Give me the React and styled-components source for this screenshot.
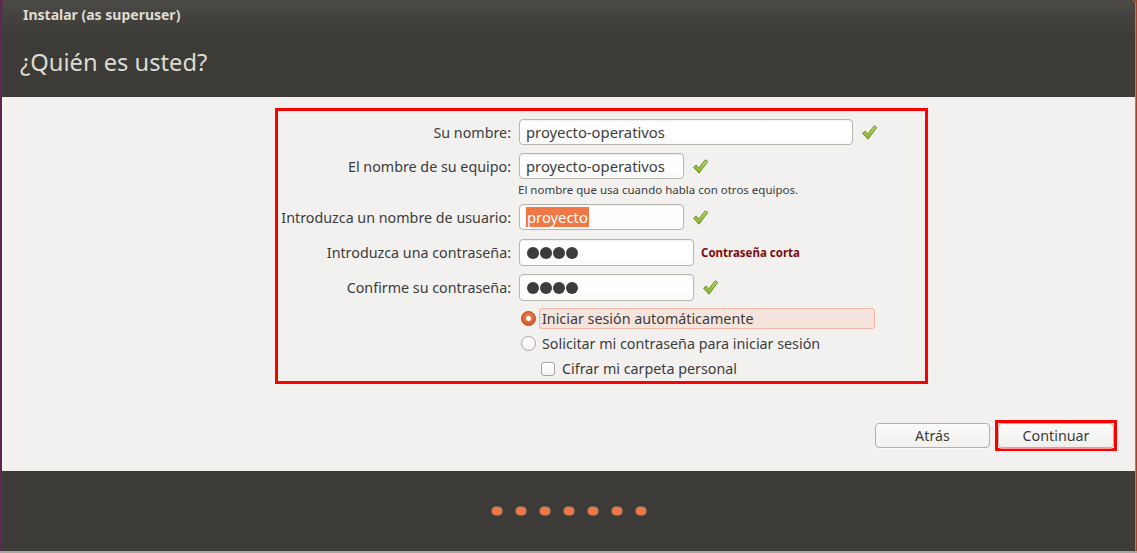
import React from "react";
import styled, { createGlobalStyle } from "styled-components";

const Global = createGlobalStyle`
  html, body { margin: 0; padding: 0; }
  body {
    width: 1137px;
    height: 553px;
    overflow: hidden;
    background: linear-gradient(90deg, #5e2750 0%, #7a2a48 60%, #a8401f 100%);
    font-family: "Noto Sans", "DejaVu Sans", sans-serif;
  }
`;

const Desktop = styled.div`
  height: 553px;
  display: flex;
  flex-direction: column;
`;

const Window = styled.div`
  margin-left: 2px;
  width: 1133px;
  height: 551px;
  display: flex;
  flex-direction: column;
  border-radius: 4px 4px 0 0;
  overflow: hidden;
  box-shadow: 1px 0 0 #8f8c86;
`;

const BottomLine = styled.div`
  height: 2px;
  background: #a9a7a3;
`;

const Header = styled.div`
  height: 97px;
  flex: none;
  background: linear-gradient(180deg, #4b4a46 0px, #3e3d39 30px, #3c3b37 40px, #3c3b37 100%);
  display: flex;
  flex-direction: column;
  color: #dfdbd2;
`;

const TitleBar = styled.div`
  height: 30px;
  padding-left: 21px;
  display: flex;
  align-items: center;
  font-size: 14px;
  font-weight: 700;
  color: #dfdbd2;
  padding-bottom: 1px;
  box-sizing: border-box;
`;

const PageTitle = styled.h1`
  margin: 0;
  padding-left: 18px;
  margin-top: 17px;
  font-size: 23.7px;
  font-weight: 400;
  line-height: 30px;
  color: #dfdbd2;
`;

const Body = styled.div`
  flex: 1;
  background: #f2f1f0;
  display: flex;
  flex-direction: column;
`;

const Frame = styled.div`
  margin-top: 11px;
  margin-left: 273px;
  width: 653px;
  height: 276px;
  box-sizing: border-box;
  border: 3px solid #ff0000;
  padding-top: 8px;
  display: flex;
  flex-direction: column;
`;

const Row = styled.div`
  display: grid;
  grid-template-columns: 233px auto auto 1fr;
  column-gap: 8px;
  align-items: center;
  margin-top: ${(p) => p.$top || 0}px;
`;

const Label = styled.label`
  text-align: right;
  font-size: 14.3px;
  color: #3c3c3c;
  white-space: nowrap;
`;

const Field = styled.div`
  width: ${(p) => p.$w}px;
  height: ${(p) => p.$h || 26}px;
  box-sizing: border-box;
  border: 1px solid #b8b5af;
  border-radius: 4px;
  background: linear-gradient(180deg, #fdfdfd 0%, #ffffff 60%, #fafafa 100%);
  box-shadow: inset 0 1px 1px rgba(0, 0, 0, 0.05);
  display: flex;
  align-items: center;
  padding-left: 6px;
  font-size: 14.8px;
  color: #3c3c3c;
`;

const Selected = styled.span`
  background: #f07746;
  color: #ffffff;
  line-height: 20px;
  padding: 0 1px;
`;

const Dots = styled.span`
  display: flex;
  gap: 1px;
  padding-left: 1px;
`;

const Dot = styled.span`
  width: 12px;
  height: 12px;
  border-radius: 50%;
  background: #3c3c3c;
`;

const Hint = styled.div`
  margin-top: 4px;
  padding-left: 240px;
  font-size: 11.5px;
  line-height: 14px;
  color: #3c3c3c;
`;

const Warning = styled.span`
  font-size: 11.5px;
  font-weight: 700;
  color: #7d0a0a;
  margin-left: -1px;
`;

const OptionRow = styled.div`
  display: flex;
  align-items: center;
  margin-top: ${(p) => p.$top || 0}px;
  padding-left: ${(p) => p.$indent || 243}px;
  height: ${(p) => p.$h || 21}px;
`;

const Radio = styled.span`
  width: 15px;
  height: 15px;
  box-sizing: border-box;
  border-radius: 50%;
  flex: none;
  display: flex;
  align-items: center;
  justify-content: center;
  border: 1px solid ${(p) => (p.$on ? "#b3461b" : "#a9a6a0")};
  background: ${(p) =>
    p.$on
      ? "radial-gradient(circle at 50% 40%, #f08a5d 0%, #e0622f 60%, #c9501f 100%)"
      : "linear-gradient(180deg, #ffffff, #f4f3f1)"};
  &::after {
    content: "";
    display: ${(p) => (p.$on ? "block" : "none")};
    width: 5px;
    height: 5px;
    border-radius: 50%;
    background: #ffffff;
  }
`;

const Check = styled.span`
  width: 14px;
  height: 14px;
  box-sizing: border-box;
  border: 1px solid #a9a6a0;
  border-radius: 3px;
  background: linear-gradient(180deg, #ffffff, #f4f3f1);
  flex: none;
`;

const OptionText = styled.span`
  font-size: 14.3px;
  color: #3c3c3c;
  margin-left: ${(p) => p.$gap || 6}px;
  ${(p) =>
    p.$focus
      ? `
    width: 336px;
    height: 21px;
    box-sizing: border-box;
    display: flex;
    align-items: center;
    padding-left: 2px;
    background: #f5e4de;
    border: 1px solid #f0b8a2;
    border-radius: 3px;
    margin-left: 3px;
  `
      : ""}
`;

const Spacer = styled.div`
  flex: 1;
`;

const ButtonBar = styled.div`
  display: flex;
  justify-content: flex-end;
  align-items: center;
  gap: 5px;
  padding-right: 18px;
  margin-bottom: 20px;
`;

const Button = styled.button`
  width: ${(p) => p.$w}px;
  height: 25px;
  box-sizing: border-box;
  border: 1px solid #b3b0aa;
  border-radius: 4px;
  background: linear-gradient(180deg, #fbfbfa 0%, #f1f0ee 100%);
  box-shadow: 0 1px 0 rgba(255, 255, 255, 0.6);
  font-family: "Noto Sans", "DejaVu Sans", sans-serif;
  font-size: 14.3px;
  color: #3c3c3c;
  padding: 0;
`;

const Highlight = styled.div`
  border: 3px solid #ff0000;
  padding: 0;
  display: flex;
`;

const Footer = styled.div`
  height: 80px;
  flex: none;
  background: #3c3b37;
  display: flex;
  align-items: center;
  justify-content: center;
  gap: 14px;
`;

const Step = styled.span`
  width: 10px;
  height: 8px;
  border-radius: 4px;
  background: #f07746;
  box-shadow: 0 0 0 1px rgba(150, 140, 130, 0.55);
`;

const Tick = () => (
  <svg width="17" height="17" viewBox="0 0 17 17">
    <defs>
      <linearGradient id="tg" x1="0" y1="0" x2="0" y2="1">
        <stop offset="0" stopColor="#b7d76a" />
        <stop offset="1" stopColor="#86b32e" />
      </linearGradient>
    </defs>
    <path
      d="M1.5 9.2 L4.2 7 L6.6 10.2 L13.2 1.8 L15.8 3.4 L7 15.2 Z"
      fill="url(#tg)"
      stroke="#6f9128"
      strokeWidth="1"
      strokeLinejoin="round"
    />
  </svg>
);

const Password = () => (
  <Dots>
    <Dot />
    <Dot />
    <Dot />
    <Dot />
  </Dots>
);

export default function App() {
  return (
    <Desktop>
      <Global />
      <Window>
        <Header>
          <TitleBar>Instalar (as superuser)</TitleBar>
          <PageTitle>¿Quién es usted?</PageTitle>
        </Header>
        <Body>
          <Frame>
            <Row>
              <Label>Su nombre:</Label>
              <Field $w={334} $h={26}>proyecto-operativos</Field>
              <Tick />
            </Row>
            <Row $top={8}>
              <Label>El nombre de su equipo:</Label>
              <Field $w={165}>proyecto-operativos</Field>
              <Tick />
            </Row>
            <Hint>El nombre que usa cuando habla con otros equipos.</Hint>
            <Row $top={7}>
              <Label>Introduzca un nombre de usuario:</Label>
              <Field $w={165}>
                <Selected>proyecto</Selected>
              </Field>
              <Tick />
            </Row>
            <Row $top={9}>
              <Label>Introduzca una contraseña:</Label>
              <Field $w={175} $h={27}>
                <Password />
              </Field>
              <Warning>Contraseña corta</Warning>
            </Row>
            <Row $top={8}>
              <Label>Confirme su contraseña:</Label>
              <Field $w={175} $h={27}>
                <Password />
              </Field>
              <Tick />
            </Row>
            <OptionRow $top={7}>
              <Radio $on />
              <OptionText $focus>Iniciar sesión automáticamente</OptionText>
            </OptionRow>
            <OptionRow $top={4}>
              <Radio />
              <OptionText>Solicitar mi contraseña para iniciar sesión</OptionText>
            </OptionRow>
            <OptionRow $top={4} $indent={263}>
              <Check />
              <OptionText $gap={7}>Cifrar mi carpeta personal</OptionText>
            </OptionRow>
          </Frame>
          <Spacer />
          <ButtonBar>
            <Button $w={115}>Atrás</Button>
            <Highlight>
              <Button $w={116}>Continuar</Button>
            </Highlight>
          </ButtonBar>
        </Body>
        <Footer>
          <Step />
          <Step />
          <Step />
          <Step />
          <Step />
          <Step />
          <Step />
        </Footer>
      </Window>
      <BottomLine />
    </Desktop>
  );
}
